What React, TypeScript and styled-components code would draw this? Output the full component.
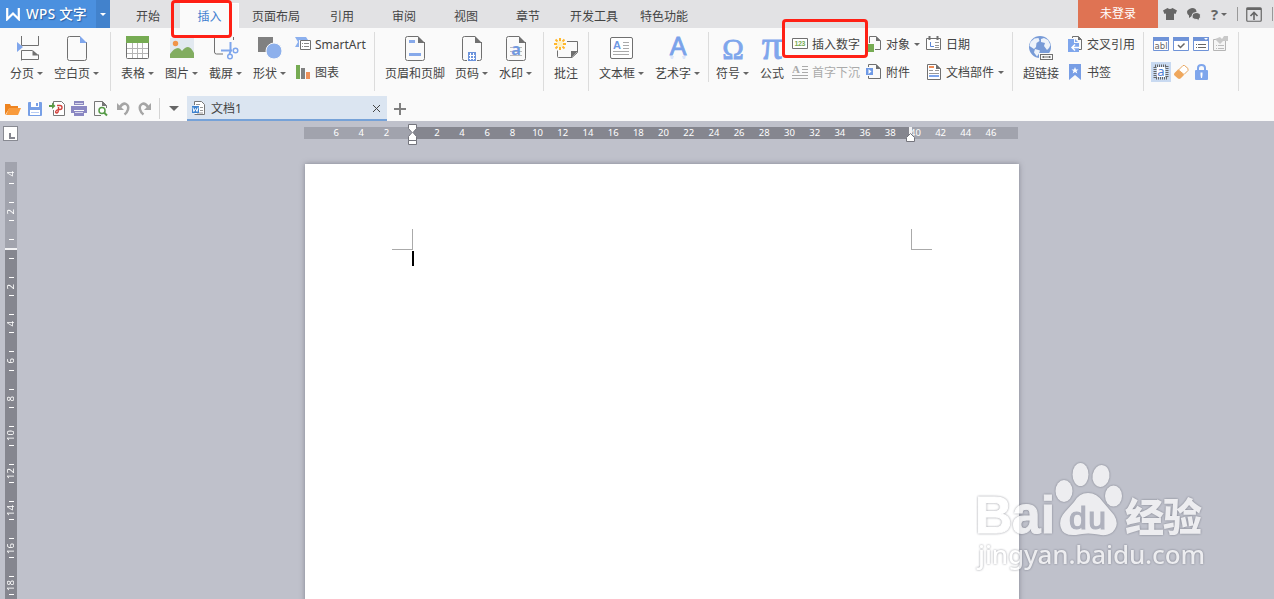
import React from 'react';
import styled, { createGlobalStyle } from 'styled-components';

const GlobalStyle = createGlobalStyle`
  * {
    box-sizing: border-box;
  }

  body {
    margin: 0;
    overflow: hidden;
    font-family: 'Noto Sans', 'Noto Sans CJK SC', sans-serif;
    font-size: 12px;
    color: #444;
  }

  svg {
    display: block;
    flex: none;
  }
`;

const Window = styled.div`
  position: relative;
  display: flex;
  flex-direction: column;
  width: 1274px;
  height: 599px;
  overflow: hidden;
  background: #bfc1cb;
  white-space: nowrap;
`;

const TitleBar = styled.header`
  display: flex;
  height: 28px;
  flex: none;
  background: #e2e2e4;
`;

const Brand = styled.div`
  display: flex;
  align-items: center;
  width: 96px;
  padding-left: 6px;
  gap: 6px;
  background: #4b90df;
  color: #fff;
  font-size: 13.5px;
  line-height: 29px;
  font-weight: 500;
  letter-spacing: 0.35px;
  text-shadow: 1px 1px 1px rgba(20, 60, 120, 0.6);
`;

const BrandMenu = styled.div`
  display: flex;
  align-items: center;
  justify-content: center;
  width: 14px;
  margin-right: 6px;
  background: #4282cc;
`;

const Tab = styled.div<{ $w: number; $active?: boolean }>`
  width: ${props => props.$w}px;
  height: ${props => props.$active ? '25px' : '28px'};
  margin-top: ${props => props.$active ? '3px' : '0'};
  line-height: ${props => props.$active ? '28px' : '34px'};
  text-align: center;
  color: ${props => props.$active ? '#3f7fd0' : '#444'};
  background: ${props => props.$active ? '#fafafa' : 'transparent'};
  box-shadow: ${props => props.$active ? 'inset -1px 1px 0 #fff' : 'none'};
`;

const LoginButton = styled.div`
  width: 80px;
  margin-left: auto;
  background: #df7353;
  color: #fff;
  line-height: 28px;
  text-align: center;
`;

const TitleTools = styled.div`
  display: flex;
  align-items: center;
  width: 116px;
  padding-left: 5px;
`;

const TitleTool = styled.div<{ $w: number }>`
  display: flex;
  align-items: center;
  gap: 3px;
  width: ${props => props.$w}px;
`;

const HelpMark = styled.span`
  font: bold 15px 'Open Sans', sans-serif;
  color: #666;
  line-height: 28px;
`;

const TitleDivider = styled.div<{ $gap?: number }>`
  width: 1px;
  height: 14px;
  margin-right: ${props => props.$gap || 0}px;
  background: #999;
`;

const Caret = styled.i<{ $color?: string; $size?: number }>`
  width: 0;
  height: 0;
  border: ${props => props.$size || 3}px solid transparent;
  border-top-color: ${props => props.$color || '#666'};
  border-bottom: 0;
`;

const Ribbon = styled.div`
  display: flex;
  align-items: flex-start;
  height: 68px;
  padding-top: 4px;
  flex: none;
  background: #fafafa;
`;

const Group = styled.div<{ $w: number; $pad?: number; $short?: boolean }>`
  display: flex;
  align-items: flex-start;
  width: ${props => props.$w}px;
  height: ${props => props.$short ? 50 : 59}px;
  padding-left: ${props => props.$pad ?? 10}px;
  gap: 10px;
  border-right: 1px solid #dcdcdc;
`;

const BigTool = styled.div<{ $w: number }>`
  display: flex;
  flex-direction: column;
  align-items: center;
  width: ${props => props.$w}px;
  flex: none;
  padding-top: 3px;
  gap: 4px;
`;

const BigLabel = styled.div`
  display: flex;
  align-items: center;
  gap: 3px;
  width: 100%;
  line-height: 17px;
`;

const Column = styled.div<{ $w?: number; $shift?: number }>`
  display: flex;
  flex-direction: column;
  flex: none;
  gap: 4px;
  width: ${props => props.$w ? `${props.$w}px` : 'auto'};
  margin-left: ${props => props.$shift || 0}px;
`;

const SmallTool = styled.div<{ $disabled?: boolean }>`
  display: flex;
  align-items: center;
  gap: 4px;
  height: 24px;
  line-height: 25px;
  color: ${props => props.$disabled ? '#aaa' : '#444'};
`;

const FormGrid = styled.div`
  display: grid;
  grid-template-columns: repeat(4, 20px);
  grid-template-rows: 24px 24px;
  row-gap: 4px;
  place-items: center;
`;

const FormCell = styled.div<{ $active?: boolean }>`
  display: flex;
  align-items: center;
  justify-content: center;
  width: 20px;
  height: 20px;
  background: ${props => props.$active ? '#c9daf1' : 'transparent'};
`;

const QuickBar = styled.div`
  display: flex;
  height: 25px;
  flex: none;
  padding-left: 4px;
  background: #fafafa;
`;

const QuickTools = styled.div`
  display: flex;
  align-items: center;
  gap: 4px;
  width: 156px;
  border-right: 1px solid #d4d4d4;
  margin: 2px 0;
`;

const QuickMore = styled.div`
  display: flex;
  align-items: center;
  justify-content: center;
  width: 28px;
  margin-right: -1px;
`;

const DocTab = styled.div`
  display: flex;
  align-items: center;
  width: 200px;
  padding: 1px 6px 0 4px;
  gap: 4px;
  border-bottom: 2px solid #76a2d8;
  background: #dbe5f1;

  svg:last-child {
    margin-left: auto;
  }
`;

const NewTab = styled.div`
  display: flex;
  align-items: center;
  padding-left: 7px;
`;

const Workspace = styled.main`
  display: grid;
  grid-template-columns: 304px 716px 1fr;
  grid-template-rows: 41px 437px;
`;

const TabStop = styled.div`
  width: 15px;
  height: 15px;
  margin: 5px 0 0 3px;
  padding: 6px 0 0 5px;
  border: 1px solid #888a92;
  background: #fff;

  i {
    display: block;
    width: 6px;
    height: 6px;
    border: solid #85868f;
    border-width: 0 0 2px 2px;
  }
`;

const HRuler = styled.div`
  position: relative;
  display: flex;
  width: 714px;
  height: 12px;
  margin-top: 6px;
  padding-left: 19.500px;
  background: linear-gradient(90deg, #a1a3ad 108px, #85868f 108px, #85868f 606px, #a1a3ad 606px);
`;

const HMark = styled.span`
  width: 25.2px;
  flex: none;
  color: #fff;
  font-size: 9.5px;
  line-height: 12px;
  text-align: center;
`;

const Marker = styled.div<{ $x: number; $y: number }>`
  position: absolute;
  left: ${props => props.$x}px;
  top: ${props => props.$y}px;
`;

const VRuler = styled.div`
  width: 12px;
  height: 437px;
  margin-left: 5px;
  overflow: hidden;
  background: linear-gradient(#a1a3ad 86px, #f2f2f4 86px, #f2f2f4 88px, #85868f 88px);
`;

const VScale = styled.div`
  margin-top: -6.5px;
`;

const VMark = styled.div<{ $first?: boolean }>`
  display: flex;
  flex-direction: column;
  align-items: center;
  justify-content: space-between;
  height: 37.4px;
  padding: 9px 0;

  i {
    width: 5px;
    height: 1px;
    background: #fff;
  }

  i:first-child {
    visibility: ${props => props.$first ? 'hidden' : 'visible'};
  }

  span {
    writing-mode: vertical-rl;
    transform: rotate(180deg);
    color: #fff;
    font-size: 9.5px;
    line-height: 12px;
    margin: -4px 0;
  }
`;

const PageArea = styled.div`
  padding: 2px 1px 0;
  overflow: visible;
`;

const Paper = styled.section`
  position: relative;
  display: flex;
  justify-content: space-between;
  width: 714px;
  height: 440px;
  padding: 65px 87px 0;
  background: #fff;
  box-shadow: 0 0 5px rgba(80, 82, 95, 0.55);
`;

const Corner = styled.div<{ $side: 'left' | 'right' }>`
  width: 21px;
  height: 21px;
  border-bottom: 1px solid #aaa;
  border-${props => props.$side === 'left' ? 'right' : 'left'}: 1px solid #aaa;
`;

const TextCursor = styled.div`
  position: absolute;
  left: 107px;
  top: 87px;
  width: 2px;
  height: 15px;
  background: #000;
`;

const Highlight = styled.div<{ $x: number; $y: number; $w: number; $h: number }>`
  position: absolute;
  left: ${props => props.$x}px;
  top: ${props => props.$y}px;
  width: ${props => props.$w}px;
  height: ${props => props.$h}px;
  border: 3px solid #ff2015;
  border-radius: 4px;
`;

const Watermark = styled.div`
  position: absolute;
  left: 970px;
  top: 455px;
  opacity: 0.72;
  filter: drop-shadow(0 0 1px rgba(70, 72, 85, 0.75));
`;

const GRAY = '#707070';
const BLUE = '#7fa6ec';
const GREEN = '#76ab53';

const big = { width: 26, height: 26, viewBox: '0 0 26 26', fill: 'none' };
const small = { width: 16, height: 16, viewBox: '0 0 16 16', fill: 'none' };
const quick = { width: 18, height: 18, viewBox: '0 0 18 18', fill: 'none' };

// Sheet outline with a folded corner, shared by several large icons
const Sheet = ({ fold = GRAY }: { fold?: string }) => (
  <>
    <path d="M16 1.500H5.500q-2 0-2 2v20q0 2 2 2h15q2 0 2-2V7" stroke={GRAY} />
    <path d="M16 1l7 7h-7z" fill={fold} />
  </>
);

const PageBreakIcon = () => (
  <svg {...big}>
    <path d="M7.500 1v9.500h17V1M7.500 25.500V15.500h11M7.500 24.500h17v-5" stroke={GRAY} />
    <path d="M18.500 15v5.500H25z" fill={GRAY} />
    <path d="M3 7l6 5-6 5z" fill={BLUE} />
  </svg>
);

const BlankPageIcon = () => <svg {...big}><Sheet fold={BLUE} /></svg>;

const TableIcon = () => (
  <svg {...big}>
    <rect x="1.500" y="1.500" width="22" height="22" rx="1" fill="#fff" stroke={GRAY} />
    <path d="M1 1h23v7H1z" fill={GREEN} />
    <path d="M2 13.500h21M2 18.500h21M7.500 8v15M12.500 8v15M17.500 8v15" stroke="#b5b5b5" />
  </svg>
);

const PictureIcon = () => (
  <svg {...big}>
    <path d="M1 3h24v19H1z" fill="#e2e9f0" />
    <circle cx="6.500" cy="8.500" r="2.700" fill="#f0944a" />
    <path d="M1 23v-4q4-6 8-6 2 0 4 3 3-4 6-4 3 0 6 6v5z" fill="#82ad60" />
  </svg>
);

const ScreenshotIcon = () => (
  <svg {...big}>
    <path d="M1.500 2v15q0 2 2 2H10M20.500 2v3" stroke={GRAY} />
    <path d="M17.500 7v9l-1 3M8 15.500h11" stroke={BLUE} strokeWidth="2" />
    <circle cx="22.500" cy="15.500" r="2.300" stroke={BLUE} strokeWidth="1.500" />
    <circle cx="17" cy="21.500" r="2.300" stroke={BLUE} strokeWidth="1.500" />
  </svg>
);

const ShapesIcon = () => (
  <svg {...big}>
    <path d="M1 2h15v15H1z" fill="#808080" />
    <circle cx="17" cy="16" r="8" fill="#8db0ec" stroke="#fafafa" />
  </svg>
);

const SmartArtIcon = () => (
  <svg {...small}>
    <path d="M0 1h11l2 3H4v7H0l3-5z" fill="#8cb0ee" />
    <path d="M5.500 4.500h10v9h-10z" fill="#fff" stroke={GRAY} />
    <path d="M7 7.500h1m1 0h5M7 10.500h1m1 0h5" stroke="#888" />
  </svg>
);

const ChartIcon = () => (
  <svg {...small}>
    <path d="M1 1h4v14H1z" fill={GREEN} />
    <path d="M6 4h4v11H6z" fill="#808080" />
    <path d="M11 8h4v7h-4z" fill="#ef9059" />
  </svg>
);

const HeaderFooterIcon = () => (
  <svg {...big}>
    <Sheet />
    <path d="M7 5h6v3H7zM7 18h12v3H7z" fill="#86a9ea" />
  </svg>
);

const PageNumberIcon = () => (
  <svg {...big}>
    <Sheet />
    <path d="M8 16h10v10H8z" fill="#fafafa" />
    <path d="M9 17h8v9H9z" fill="#6d94dc" />
    <path d="M11.500 18v7M14.500 18v7M10 20.500h6M10 23.500h6" stroke="#fff" />
  </svg>
);

const PageWatermarkIcon = () => (
  <svg {...big}>
    <Sheet />
    <path d="M7 12.500h12M7 16.500h12M7 20.500h12" stroke="#bbb" />
    <text x="13" y="20" textAnchor="middle" fontSize="16" fontWeight="bold" fontFamily="Noto Sans, sans-serif" fill="#7298df">a</text>
  </svg>
);

const CommentIcon = () => (
  <svg {...big}>
    <path d="M14 6.500h10.500v11l-5.500 5H5.500q-1 0-1-1v-6" stroke={GRAY} />
    <path d="M18 16h7l-7 7z" fill={GRAY} />
    <circle cx="7" cy="9" r="3" fill="#fff1c2" />
    <path d="M7 3v3M7 12v3M1 9h3M10 9h3M2.500 4.500l2 2M9.500 11.500l2 2M11.500 4.500l-2 2M4.500 11.500l-2 2" stroke="#ffb72c" strokeWidth="2" />
  </svg>
);

const TextBoxIcon = () => (
  <svg {...big}>
    <rect x="1.500" y="2.500" width="22" height="21" rx="1.500" fill="#fff" stroke={GRAY} />
    <text x="4" y="14" fontSize="11" fontWeight="bold" fontFamily="Liberation Sans, sans-serif" fill="#6f98e3">A</text>
    <path d="M14 7.500h6M14 10.500h6M14 13.500h6M4 16.500h16M4 19.500h16" stroke="#aaa" />
  </svg>
);

const WordArtIcon = () => (
  <svg {...big} overflow="visible">
    <text x="13" y="20" textAnchor="middle" fontSize="25" fontFamily="Liberation Sans, sans-serif" fill="#7aa2ea" stroke="#7aa2ea" strokeWidth=".8">A</text>
    <path d="M5 21h4l-1 3H6zM17 21h4l-1 3h-2z" fill="#dce6fa" />
  </svg>
);

const SymbolIcon = ({ glyph, size }: { glyph: string; size: number }) => (
  <svg {...big} overflow="visible">
    <text x="13" y="23.500" textAnchor="middle" fontSize={size} fontFamily="Liberation Serif, serif" fill={BLUE} stroke={BLUE} strokeWidth=".8">{glyph}</text>
  </svg>
);

const InsertNumberIcon = () => (
  <svg {...small}>
    <path d="M.5 2.500h15v10H.5z" fill="#fff" stroke={GRAY} />
    <text x="2.500" y="10" fontSize="7" fontWeight="bold" textLength="11" fontFamily="Liberation Sans, sans-serif" fill={GREEN}>123</text>
  </svg>
);

const DropCapIcon = () => (
  <svg {...small}>
    <text x="0" y="9" fontSize="11" fontFamily="Liberation Serif, serif" fontWeight="bold" fill="#aaa">A</text>
    <path d="M10 2.500h6M10 5.500h6M10 8.500h6M0 11.500h16M0 14.500h16" stroke="#aaa" />
  </svg>
);

const ObjectIcon = () => (
  <svg {...small}>
    <path d="M3.500 7V.5H10l4.500 4.500v8.500H9" stroke={GRAY} />
    <path d="M10 0v5h5z" fill={GRAY} />
    <path d="M1 8h7v8H1z" fill={GREEN} />
  </svg>
);

const AttachmentIcon = () => (
  <svg {...small}>
    <path d="M2.500 3V.5H10l4.500 4.500v9.500h-12V12" stroke={GRAY} />
    <path d="M10 0v5h5z" fill={GRAY} />
    <path d="M0 4h7v7H0z" fill="#6f9ae6" />
    <path d="M2.500 5v5l3-2.500z" fill="#fff" />
  </svg>
);

const DateIcon = () => (
  <svg {...small}>
    <path d="M.5 2.500h14v11H.5z" fill="#fff" stroke={GRAY} />
    <path d="M3.500 0v4M11.500 0v4" stroke={GRAY} strokeWidth="2" />
    <path d="M9 6.500h4M9 9.500h4M9 11.500h4" stroke="#999" />
    <path d="M4.500 6v4.500H8" stroke="#5b86d6" />
  </svg>
);

const DocPartsIcon = () => (
  <svg {...small}>
    <path d="M1.500.5H10l4.500 4.500v10.500h-13z" fill="#fff" stroke={GRAY} />
    <path d="M10 0v5h5z" fill={GRAY} />
    <path d="M3 3h5" stroke="#ef8a55" strokeWidth="2" />
    <path d="M3 6.500h4M9 6.500h4M3 9.500h10" stroke="#999" />
    <path d="M3 12h10" stroke={BLUE} strokeWidth="2" />
  </svg>
);

const HyperlinkIcon = () => (
  <svg {...big}>
    <circle cx="12" cy="12" r="11" fill="#789bd7" />
    <path d="M2.500 7l4-3.500 4-.5 1 3-3 2-.5 4-2 2-3-2-1.500-1zM13 4l3-1 4 2 2.500 5-1.500 3-2 2-3-4 1-3-4-1zM7 14l5 1.500-1 3-2 3-3-4z" fill="#eef3fa" />
    <path d="M11 18h15v8H11z" fill="#fafafa" />
    <rect x="12.500" y="19.500" width="12" height="5" stroke={GRAY} />
    <path d="M14.500 22h2M20.500 22h2" stroke={GRAY} strokeWidth="2" />
    <path d="M17 22h3" stroke={GRAY} />
  </svg>
);

const CrossRefIcon = () => (
  <svg {...small}>
    <path d="M5.500 2V.5h6l3 3v10H12" stroke={GRAY} />
    <path d="M11 0v4h4z" fill={GRAY} />
    <path d="M1 3h6v4h5v9H1z" fill={BLUE} />
    <path d="M8 3l3 3H8z" fill={BLUE} />
    <path d="M12 11.500H5M8 8.500l-3 3 3 3" stroke="#fff" strokeWidth="1.500" />
  </svg>
);

const BookmarkIcon = () => (
  <svg {...small}>
    <path d="M2 0h12v16l-6-5-6 5z" fill="#789ee5" />
    <path d="M8 3l1 2.500h2.500l-2 1.500.8 2.500L8 8 5.700 9.500l.8-2.500-2-1.500H7z" fill="#fff" />
  </svg>
);

const FormIcon = ({ children }: { children?: React.ReactNode }) => (
  <svg {...small}>
    <path d="M.5 1.500h15v13H.5z" fill="#fff" stroke="#6f93d8" />
    <path d="M0 1h16v4H0z" fill="#6f93d8" />
    {children}
  </svg>
);

const FormOptionsIcon = () => (
  <svg {...small}>
    <path d="M.5 3.500h12v11H.5z" fill="#f5f5f5" stroke="#b5b5b5" />
    <path d="M2 3l5 5 3-3h5V0h-4L9 3 7 1z" fill="#c9c9c9" />
    <path d="M3 9.500h1m1 0h6M3 12.500h1m1 0h6" stroke="#bbb" />
  </svg>
);

const ShadingIcon = () => (
  <svg {...small}>
    <rect x="2" y="2" width="12" height="12" stroke="#666" strokeWidth="3" strokeDasharray="1 1" />
    <path d="M4 3h8v10H4z" fill="#fff" />
    <text x="8" y="12" textAnchor="middle" fontSize="13" fontFamily="Noto Sans, sans-serif" fill="#4f80d5">a</text>
  </svg>
);

const EraserIcon = () => (
  <svg {...small}>
    <path d="M10 1.500h1.500l3.500 3v2l-4 4L5.500 6z" fill="#fff" stroke="#e8a65f" strokeLinejoin="round" />
    <path d="M5 5.500l6 5.500-3.500 3.500q-1.500.8-2.500 0l-3.500-3q-1.200-1.500 0-2.500z" fill="#efa75c" />
  </svg>
);

const LockIcon = () => (
  <svg {...small}>
    <path d="M5 7V4q0-3 3.500-3T12 4v3" stroke={BLUE} strokeWidth="2" />
    <rect x="2" y="6" width="13" height="10" rx="1" fill={BLUE} />
    <path d="M7.500 8.500h2v2.500l-.5 3h-1l-.5-3z" fill="#fff" />
  </svg>
);

const OpenIcon = () => (
  <svg {...quick}>
    <path d="M1 15V4h5l1 2h7v3H5z" fill="#ee8420" />
    <path d="M5 8h12l-3 7H2z" fill="#f99b3c" />
  </svg>
);

const SaveIcon = () => (
  <svg {...quick}>
    <rect x="2" y="2" width="14" height="14" rx="1" fill="#779fe6" />
    <path d="M5 2h8v5H5zM4 10h10v5H4z" fill="#fff" />
    <path d="M10 3h2v3h-2z" fill="#779fe6" />
    <path d="M5 12.500h8" stroke="#b6cbf3" />
  </svg>
);

const PdfIcon = () => (
  <svg {...quick}>
    <path d="M5.500 4V1.500h8l3 3v11h-11V10" fill="#fff" stroke="#777" />
    <path d="M9 5.500h3q2 0 2 2t-2 2q-3-.2-4 1.500t.5 2q2 0 2-4v-2" stroke="#d2413c" strokeWidth="1.400" />
    <path d="M1 5h3V2.500L7.500 6 4 9V7H1z" fill="#5a9a45" />
  </svg>
);

const PrintIcon = () => (
  <svg {...quick}>
    <path d="M4 1h10v4H4z" fill="#8b88bf" />
    <path d="M1 6h16v7h-3v-3H4v3H1zM4 11h10v5H4z" fill="#8b88c3" />
    <path d="M5 3.500h8M5 12.500h8" stroke="#d9d8ec" />
  </svg>
);

const PreviewIcon = () => (
  <svg {...quick}>
    <path d="M9 15.500H2.500v-14h8l4 4V8" stroke="#777" />
    <path d="M10 1v5h5z" fill="#777" />
    <circle cx="10" cy="10.500" r="3" fill="#fff" stroke="#569b47" strokeWidth="1.500" />
    <path d="M12 12.500l3 3" stroke="#569b47" strokeWidth="2" />
  </svg>
);

const UndoIcon = ({ flip }: { flip?: boolean }) => (
  <svg {...quick}>
    <g transform={flip ? 'matrix(-1 0 0 1 18 0)' : undefined}>
      <path d="M6 7q3-4.500 6-3t2 5.500q-.8 3-3.500 5" stroke="#a5a5a5" strokeWidth="2.500" />
      <path d="M3 3v7h7z" fill="#a5a5a5" />
    </g>
  </svg>
);

const WordDocIcon = () => (
  <svg {...small}>
    <path d="M3.500 5V1.500h7l3 3v10h-10" fill="#fff" stroke="#777" />
    <path d="M5 4.500h4M9 7.500h3M9 10.500h3M6 13h6" stroke="#999" />
    <path d="M1 6h7v7H1z" fill="#3e83cf" />
    <path d="M2 7.500l.8 4L4.500 8.500l1.500 3 1-4" stroke="#fff" />
  </svg>
);

const MarginTopMarker = () => (
  <svg width="9" height="22" viewBox="0 0 9 22">
    <path d="M.5.5h8v4l-3.500 4 3.500 4v4h-8v-4l3.500-4-3.500-4zM.5 16.500h8v4h-8z" fill="#fff" stroke="#74757d" />
  </svg>
);

const RightIndentMarker = () => (
  <svg width="9" height="15" viewBox="0 0 9 15">
    <path d="M3 0h3v7H3z" fill="#f2f2f4" />
    <path d="M4.500 6.500l4 4v4h-8v-4z" fill="#fff" stroke="#74757d" />
  </svg>
);

const tabs = [
  { name: '开始', w: 64 },
  { name: '插入', w: 59, active: true },
  { name: '页面布局', w: 74 },
  { name: '引用', w: 58 },
  { name: '审阅', w: 66 },
  { name: '视图', w: 58 },
  { name: '章节', w: 66 },
  { name: '开发工具', w: 66 },
  { name: '特色功能', w: 74 },
];

const hMarks = ['6', '4', '2', ''].concat(Array.from({ length: 23 }, (_, i) => String((i + 1) * 2)));
const vMarks = ['4', '2', ''].concat(Array.from({ length: 9 }, (_, i) => String((i + 1) * 2)));

interface ToolProps {
  icon: React.ReactNode;
  label: string;
  menu?: boolean;
  disabled?: boolean;
}

const Big: React.FC<ToolProps> = ({ icon, label, menu }) => (
  <BigTool $w={label.length * 12 + (menu ? 10 : 0)}>
    {icon}
    <BigLabel>{label}{menu && <Caret />}</BigLabel>
  </BigTool>
);

const Small: React.FC<ToolProps> = ({ icon, label, menu, disabled }) => (
  <SmallTool $disabled={disabled}>
    {icon}
    {label}
    {menu && <Caret />}
  </SmallTool>
);

const App: React.FC = () => {
  return (
    <Window>
      <GlobalStyle />
      <TitleBar>
        <Brand>
          <svg width="14" height="13" viewBox="0 0 14 13" fill="none">
            <path d="M1.200 0v11.200L7 5.500l5.800 5.700V0" stroke="#fff" strokeWidth="2.200" />
          </svg>
          WPS 文字
        </Brand>
        <BrandMenu><Caret $color="#fff" /></BrandMenu>
        {tabs.map(tab => (
          <Tab key={tab.name} $w={tab.w} $active={tab.active}>{tab.name}</Tab>
        ))}
        <LoginButton>未登录</LoginButton>
        <TitleTools>
          <TitleTool $w={24}>
            <svg width="14" height="14" viewBox="0 0 14 14">
              <path d="M4.500 1q2.500 2 5 0L14 3.500 12.500 7 11 6.500V13H3V6.500L1.500 7 0 3.500z" fill="#666" />
            </svg>
          </TitleTool>
          <TitleTool $w={24}>
            <svg width="14" height="14" viewBox="0 0 14 14">
              <path d="M5 1q4.500 0 4.500 4T5 9L2 11V8.500Q0 7.500 0 5t5-4z" fill="#666" />
              <path d="M9 5.500q4.500 0 4.500 3.500 0 2-1.500 3v2l-2-1.500q-5 0-5-3.500T9 5.500z" fill="#666" stroke="#e2e2e4" />
            </svg>
          </TitleTool>
          <TitleTool $w={26}><HelpMark>?</HelpMark><Caret /></TitleTool>
          <TitleDivider $gap={8} />
          <TitleTool $w={26}>
            <svg width="16" height="15" viewBox="0 0 16 15" fill="none">
              <rect x=".75" y=".75" width="14.500" height="13.500" rx="1" stroke="#666" strokeWidth="1.200" />
              <path d="M1 2h14" stroke="#666" strokeWidth="2" />
              <path d="M8 13V6M4.500 9L8 5.500 11.500 9" stroke="#666" strokeWidth="1.600" />
            </svg>
          </TitleTool>
          <TitleDivider />
        </TitleTools>
      </TitleBar>

      <Ribbon>
        <Group $w={111}>
          <Big icon={<PageBreakIcon />} label="分页" menu />
          <Big icon={<BlankPageIcon />} label="空白页" menu />
        </Group>
        <Group $w={264}>
          <Big icon={<TableIcon />} label="表格" menu />
          <Big icon={<PictureIcon />} label="图片" menu />
          <Big icon={<ScreenshotIcon />} label="截屏" menu />
          <Big icon={<ShapesIcon />} label="形状" menu />
          <Column $shift={-2}>
            <Small icon={<SmartArtIcon />} label="SmartArt" />
            <Small icon={<ChartIcon />} label="图表" />
          </Column>
        </Group>
        <Group $w={169}>
          <Big icon={<HeaderFooterIcon />} label="页眉和页脚" />
          <Big icon={<PageNumberIcon />} label="页码" menu />
          <Big icon={<PageWatermarkIcon />} label="水印" menu />
        </Group>
        <Group $w={45}>
          <Big icon={<CommentIcon />} label="批注" />
        </Group>
        <Group $w={120} $short>
          <Big icon={<TextBoxIcon />} label="文本框" menu />
          <Big icon={<WordArtIcon />} label="艺术字" menu />
        </Group>
        <Group $w={304} $pad={7}>
          <Big icon={<SymbolIcon glyph="Ω" size={29} />} label="符号" menu />
          <Big icon={<SymbolIcon glyph="π" size={41} />} label="公式" />
          <Column $w={64} $shift={-2}>
            <Small icon={<InsertNumberIcon />} label="插入数字" />
            <Small icon={<DropCapIcon />} label="首字下沉" disabled />
          </Column>
          <Column $w={50}>
            <Small icon={<ObjectIcon />} label="对象" menu />
            <Small icon={<AttachmentIcon />} label="附件" />
          </Column>
          <Column>
            <Small icon={<DateIcon />} label="日期" />
            <Small icon={<DocPartsIcon />} label="文档部件" menu />
          </Column>
        </Group>
        <Group $w={131}>
          <Big icon={<HyperlinkIcon />} label="超链接" />
          <Column $shift={-2}>
            <Small icon={<CrossRefIcon />} label="交叉引用" />
            <Small icon={<BookmarkIcon />} label="书签" />
          </Column>
        </Group>
        <Group $w={95} $pad={7}>
          <FormGrid>
            <FormIcon>
              <text x="1.500" y="13" textLength="13" fontSize="8.500" fontFamily="DejaVu Sans, sans-serif" fill="#666">abl</text>
            </FormIcon>
            <FormIcon><path d="M5 9l2.500 2.500L11.500 7.500" stroke="#666" strokeWidth="1.500" /></FormIcon>
            <FormIcon>
              <path d="M11 2h4l-2 2z" fill="#fff" />
              <path d="M3 8.500h1m1 0h8M3 11.500h1m1 0h8" stroke="#666" />
            </FormIcon>
            <FormOptionsIcon />
            <FormCell $active><ShadingIcon /></FormCell>
            <FormCell><EraserIcon /></FormCell>
            <FormCell><LockIcon /></FormCell>
          </FormGrid>
        </Group>
      </Ribbon>

      <QuickBar>
        <QuickTools>
          <OpenIcon />
          <SaveIcon />
          <PdfIcon />
          <PrintIcon />
          <PreviewIcon />
          <UndoIcon />
          <UndoIcon flip />
        </QuickTools>
        <QuickMore><Caret $size={5} /></QuickMore>
        <DocTab>
          <WordDocIcon />
          文档1
          <svg width="9" height="9" viewBox="0 0 9 9">
            <path d="M1 1l7 7M8 1L1 8" stroke="#444" />
          </svg>
        </DocTab>
        <NewTab>
          <svg width="12" height="12" viewBox="0 0 12 12">
            <path d="M6 0v12M0 6h12" stroke="#808080" strokeWidth="2" />
          </svg>
        </NewTab>
      </QuickBar>

      <Workspace>
        <TabStop><i /></TabStop>
        <HRuler>
          {hMarks.map((mark, i) => <HMark key={i}>{mark}</HMark>)}
          <Marker $x={104} $y={-3}><MarginTopMarker /></Marker>
          <Marker $x={602} $y={0}><RightIndentMarker /></Marker>
        </HRuler>
        <div />
        <VRuler>
          <VScale>
            {vMarks.map((mark, i) => (
              <VMark key={i} $first={i === 0}>
                <i />
                {mark && <span>{mark}</span>}
                <i />
              </VMark>
            ))}
          </VScale>
        </VRuler>
        <PageArea>
          <Paper>
            <Corner $side="left" />
            <Corner $side="right" />
            <TextCursor />
          </Paper>
        </PageArea>
      </Workspace>

      <Highlight $x={171} $y={0} $w={61} $h={38} />
      <Highlight $x={782} $y={19} $w={86} $h={39} />

      <Watermark>
        <svg width="245" height="125" viewBox="0 0 245 125" fill="#fff">
          <text x="5" y="78" fontFamily="Liberation Sans, sans-serif" fontSize="51" fontWeight="bold" textLength="80" lengthAdjust="spacingAndGlyphs" stroke="#fff">Bai</text>
          <ellipse cx="94" cy="36" rx="8.500" ry="11" />
          <ellipse cx="110.500" cy="19.500" rx="8" ry="11.500" />
          <ellipse cx="131" cy="21" rx="8.500" ry="11" transform="rotate(10 131 21)" />
          <ellipse cx="143.500" cy="41" rx="8.500" ry="10.500" />
          <path d="M118 38q9 0 15 9l11 13q5 8 1 14-4 7-14 6-13-3-25 0-13 1-15-7-3-8 4-16l9-10q5-9 14-9z" />
          <text x="99" y="74" fontFamily="Liberation Sans, sans-serif" fontSize="32" textLength="37" fill="#a9acb9" stroke="#a9acb9" strokeWidth="1.200">du</text>
          <text x="155" y="76" fontFamily="Noto Sans CJK SC, sans-serif" fontSize="39" fontWeight="900" textLength="77">经验</text>
          <text x="8" y="109" fontFamily="Noto Sans, sans-serif" fontSize="26" fontWeight="500" textLength="227">jingyan.baidu.com</text>
        </svg>
      </Watermark>
    </Window>
  );
};

export default App;
